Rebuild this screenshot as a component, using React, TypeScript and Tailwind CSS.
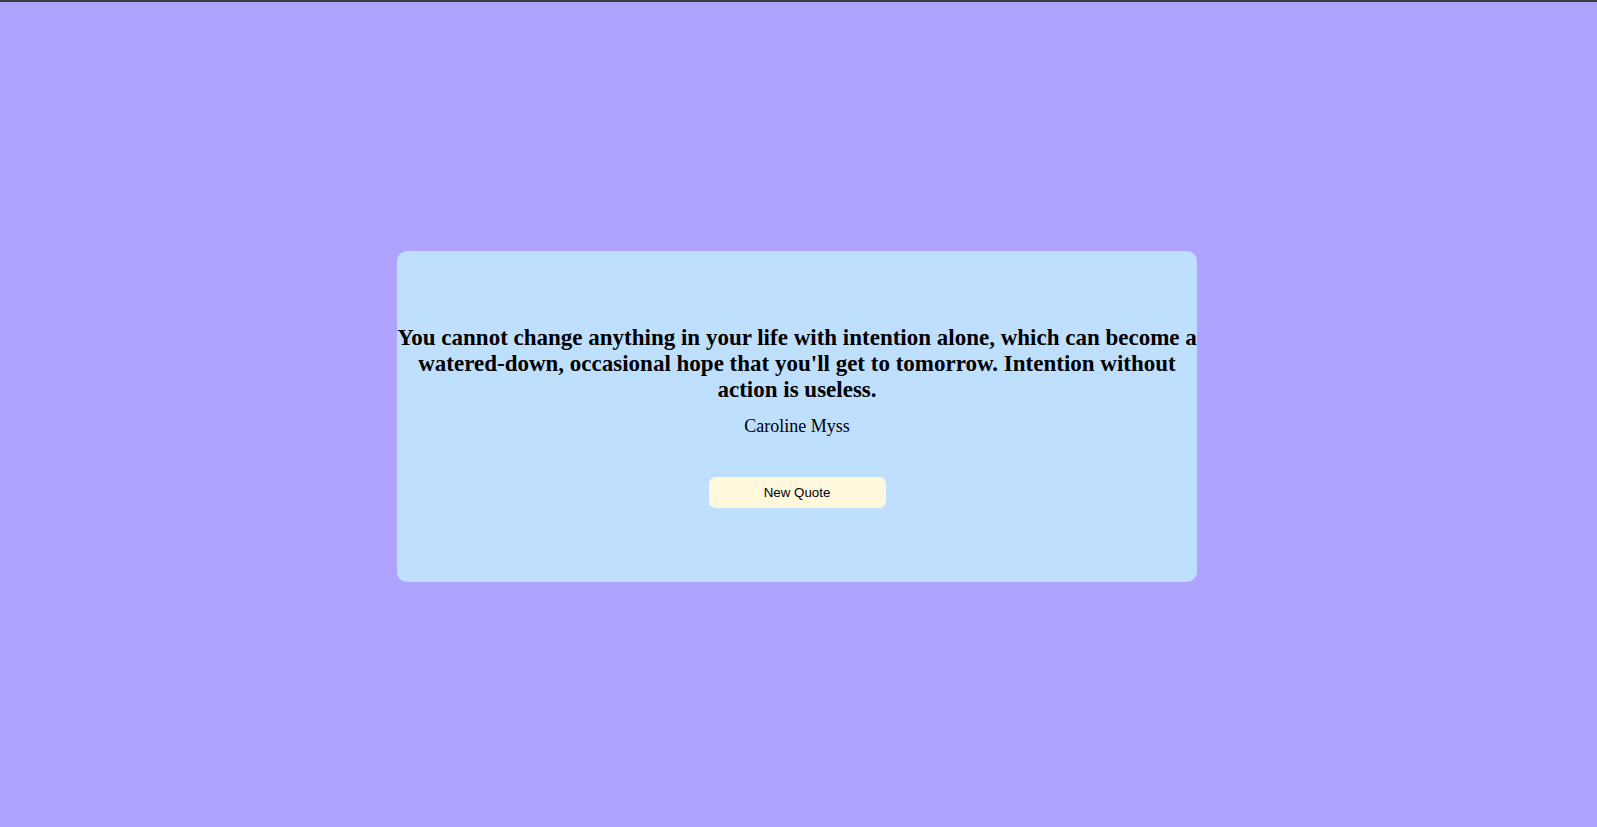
export default function App() {
    return (
        <div className="min-h-screen w-full border-t-2 border-[#3b3b3b] bg-[#aea4ff] flex items-center justify-center pt-[4px] pr-[3px]">
            <div className="w-[800px] h-[331px] rounded-[10px] bg-[#bfdfff] flex flex-col items-center justify-center text-center text-black">
                <h2 className="font-['Liberation_Serif',serif] font-bold text-[23px] leading-[26px]">
                    You cannot change anything in your life with intention alone, which can become a watered-down, occasional hope that you'll get to tomorrow. Intention without action is useless.
                </h2>
                <p className="font-['Liberation_Serif',serif] text-[18px] leading-[21px] mt-[13px]">Caroline Myss</p>
                <button className="mt-[40px] w-[177px] h-[31px] rounded-[7px] bg-[#fff8dc] font-['Liberation_Sans',Arial,sans-serif] text-[13.33px] text-black">
                    New Quote
                </button>
            </div>
        </div>
    );
}
